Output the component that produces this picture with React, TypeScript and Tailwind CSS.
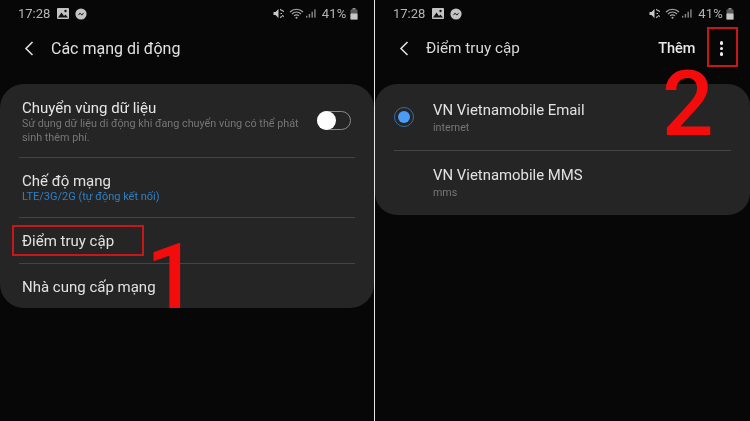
function Status() {
  return (
    <div className="flex h-[26px] items-center pl-[18px] pr-[16px] pt-[1px] text-[13px] text-[#b4b4b4]">
      <span>17:28</span>
      <svg className="ml-[7px]" width="12" height="11" viewBox="0 0 12 11">
        <rect x="0" y="0" width="12" height="11" rx="1" fill="#c4c4c4" />
        <circle cx="8.5" cy="3" r="1.2" fill="#111" />
        <path d="M1 9.5 L4.5 4.5 L7 8 L8.5 6.5 L11 9.5Z" fill="#111" />
      </svg>
      <svg className="ml-[6px]" width="12" height="12" viewBox="0 0 12 12">
        <circle cx="6" cy="6" r="5.6" fill="#c4c4c4" />
        <path d="M2.5 7.6 L5 4.8 L6.6 6.2 L9.5 4.4 L7 7.4 L5.4 6 Z" fill="#111" />
      </svg>
      <div className="flex-1" />
      <svg width="12" height="11" viewBox="0 0 11 11">
        <path d="M0 4 H2 L5 1 V10 L2 7 H0 Z" fill="#c8c8c8" />
        <path d="M7 1 L8 3 M7 5.5 H8.5 M7 10 L8 8 M9 2 L10 4 M9 7 L10 9" stroke="#c8c8c8" strokeWidth="1.1" />
      </svg>
      <svg className="ml-[4px]" width="15" height="11" viewBox="0 0 15 11">
        <path d="M1 4 A9 9 0 0 1 14 4 M3 6 A6.2 6.2 0 0 1 12 6 M5 8 A3.4 3.4 0 0 1 10 8" fill="none" stroke="#a8a8a8" strokeWidth="1.1" />
        <circle cx="7.5" cy="9.8" r="1" fill="#a8a8a8" />
      </svg>
      <svg className="ml-[2px]" width="11" height="11" viewBox="0 0 12 11">
        <rect x="0" y="8" width="1.5" height="2" fill="#8a8a8a" />
        <rect x="3" y="6" width="1.5" height="4" fill="#8a8a8a" />
        <rect x="6" y="3.5" width="1.5" height="6.5" fill="#8a8a8a" />
        <rect x="9" y="1" width="1.5" height="9" fill="#8a8a8a" />
      </svg>
      <span className="ml-[5px] tracking-[0.2px]">41%</span>
      <svg className="ml-[3px]" width="8" height="12" viewBox="0 0 8 12">
        <rect x="2.5" y="0" width="3" height="2" fill="#8f8f8f" />
        <rect x="0.5" y="1.5" width="7" height="10" rx="0.6" fill="#5a5a5a" />
        <rect x="0.5" y="5.5" width="7" height="6" rx="0.6" fill="#c8c8c8" />
      </svg>
    </div>
  );
}

function Back() {
  return (
    <svg width="10" height="15" viewBox="0 0 10 15" fill="none" stroke="#dedede" strokeWidth="1.6">
      <path d="M8.5 1 L2 7.5 L8.5 14" />
    </svg>
  );
}

function Divider() {
  return <div className="mx-[19px] h-px bg-[#444444]" />;
}

export default function App() {
  return (
    <div className="relative flex h-[421px] w-[750px] overflow-hidden bg-[#070707] font-['Roboto','Liberation_Sans',sans-serif] blur-[0.35px]">
      {/* left phone */}
      <div className="flex w-[373.5px] flex-col">
        <Status />
        <div className="flex h-[44px] items-center pl-[24px] pt-[1px]">
          <Back />
          <span className="ml-[17px] text-[16px] text-[#e0e0e0]">Các mạng di động</span>
        </div>
        <div className="mt-[14px] flex h-[224px] flex-col rounded-[24px] bg-[#252525]">
          <div className="flex h-[73px] items-center justify-between pl-[22px] pr-[23px]">
            <div className="w-[290px] pt-[2px]">
              <div className="text-[15px] leading-[18px] text-[#e6e6e6]">Chuyển vùng dữ liệu</div>
              <div className="text-[10.8px] leading-[14px] text-[#767676]">
                Sử dụng dữ liệu di động khi đang chuyển vùng có thể phát sinh thêm phí.
              </div>
            </div>
            <div className="flex h-[19px] w-[34px] items-center rounded-full border border-[#8a8a8a]">
              <div className="-ml-px h-[19px] w-[19px] rounded-full bg-white" />
            </div>
          </div>
          <Divider />
          <div className="flex h-[59px] flex-col justify-center pl-[22px]">
            <div className="text-[15px] leading-[18px] text-[#e2e2e2]">Chế độ mạng</div>
            <div className="text-[11px] leading-[14px] text-[#2f7fc4]">LTE/3G/2G (tự động kết nối)</div>
          </div>
          <Divider />
          <div className="flex h-[45px] items-center pl-[22px] pt-[1px] text-[15px] text-[#e2e2e2]">Điểm truy cập</div>
          <Divider />
          <div className="flex flex-1 items-center pl-[22px] pt-[2px] text-[15px] text-[#e2e2e2]">Nhà cung cấp mạng</div>
        </div>
      </div>
      <div className="w-[1.5px] bg-[#e8e8e8]" />
      {/* right phone */}
      <div className="flex flex-1 flex-col">
        <Status />
        <div className="flex h-[44px] items-center pl-[24px] pr-[27px] pt-[1px]">
          <Back />
          <span className="ml-[17px] text-[15.3px] text-[#d8d8d8]">Điểm truy cập</span>
          <span className="ml-auto text-[14.5px] font-medium text-[#e8e8e8]">Thêm</span>
          <div className="ml-[24px] flex flex-col gap-[2px]">
            <div className="h-[3.5px] w-[3.5px] rounded-full bg-[#eeeeee]" />
            <div className="h-[3.5px] w-[3.5px] rounded-full bg-[#eeeeee]" />
            <div className="h-[3.5px] w-[3.5px] rounded-full bg-[#eeeeee]" />
          </div>
        </div>
        <div className="mt-[14px] flex h-[131px] flex-col rounded-[22px] bg-[#252525]">
          <div className="flex h-[66px] items-center pl-[19px]">
            <div className="flex h-[20px] w-[20px] items-center justify-center rounded-full border border-[#3c6c9e]">
              <div className="h-[12px] w-[12px] rounded-full bg-[#4a9cf6]" />
            </div>
            <div className="ml-[19px] pt-[1px]">
              <div className="text-[14.9px] leading-[18px] text-[#e2e2e2]">VN Vietnamobile Email</div>
              <div className="mt-[2px] text-[10.7px] leading-[13px] text-[#767676]">internet</div>
            </div>
          </div>
          <Divider />
          <div className="flex flex-1 flex-col justify-center pb-[2px] pl-[58px]">
            <div className="text-[14.9px] leading-[18px] text-[#e2e2e2]">VN Vietnamobile MMS</div>
            <div className="mt-[2px] text-[10.7px] leading-[13px] text-[#767676]">mms</div>
          </div>
        </div>
      </div>
      {/* annotations */}
      <div className="absolute left-[12px] top-[225px] h-[31px] w-[132px] border-[2px] border-[#c8161a]" />
      <div className="absolute left-[707px] top-[27px] h-[40px] w-[31px] border-[2px] border-[#c8161a]" />
      <div className="absolute left-[146px] top-[242px] text-[91px] leading-[70px] font-medium text-[#f20c0c]">1</div>
      <div className="absolute left-[662px] top-[69px] text-[91px] leading-[70px] font-medium text-[#f20c0c]">2</div>
    </div>
  );
}
